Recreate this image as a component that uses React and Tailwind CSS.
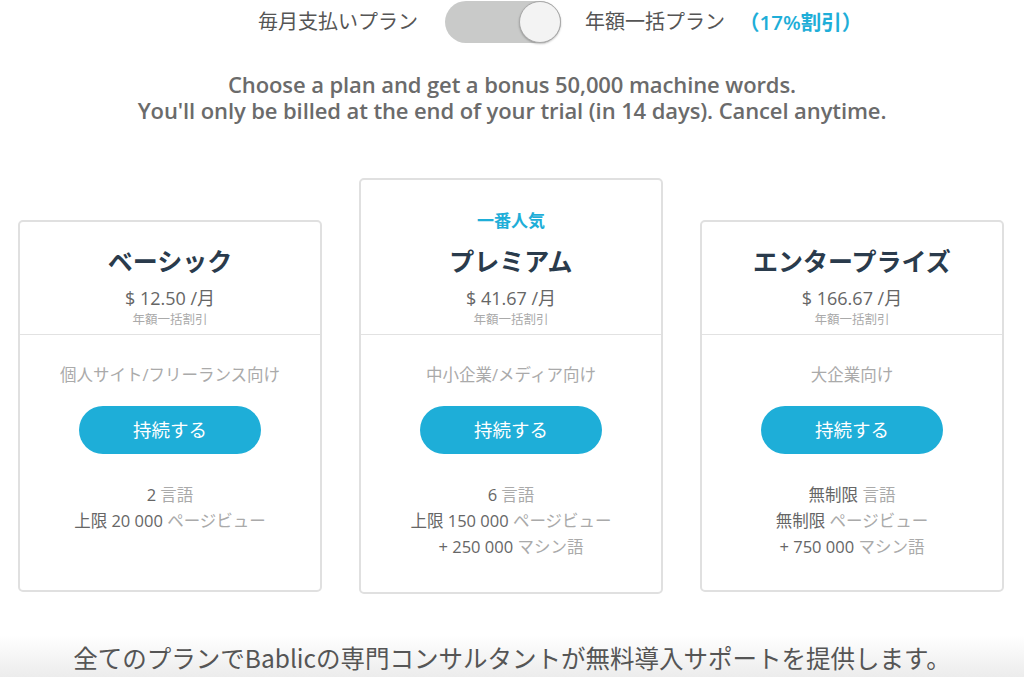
import React from "react";

const F = "font-['Open_Sans','Noto_Sans_CJK_JP',sans-serif]";

function Card({ badge, title, price, desc, features, tall }) {
  return (
    <div
      className={`w-[304px] border-2 border-[#e0e0e0] rounded-[5px] bg-white flex flex-col ${
        tall ? "h-[416px]" : "h-[372px] mt-[42px]"
      }`}
    >
      <div className={`border-b border-[#e2e2e2] flex flex-col items-center pb-[6px] ${tall ? "pt-[28px]" : "pt-[22px]"}`}>
        {badge && (
          <div className="text-[17px] leading-[24px] font-bold text-[#1eaed8] mb-[12px] font-['Noto_Sans_CJK_JP',sans-serif]">
            {badge}
          </div>
        )}
        <div className="text-[25px] leading-[32px] font-bold text-[#2a3b4c] font-['Noto_Sans_CJK_JP',sans-serif]">
          {title}
        </div>
        <div className="mt-[10px] text-[18px] leading-[24px] text-[#666]">
          $ {price} /月
        </div>
        <div className="mt-[2px] text-[12.5px] leading-[16px] text-[#aaa]">年額一括割引</div>
      </div>
      <div className="flex flex-col items-center pt-[28px]">
        <div className="text-[16.5px] leading-[24px] text-[#aaa]">{desc}</div>
        <button className="mt-[19px] w-[182px] h-[48px] rounded-full bg-[#1eaed8] text-white text-[18.5px] leading-[24px]">
          持続する
        </button>
        <div className="mt-[28px] flex flex-col items-center">
          {features.map(([a, b], i) => (
            <div key={i} className="text-[16.5px] leading-[26px]">
              <span className="text-[#666]">{a}</span>{" "}
              <span className="text-[#aaa]">{b}</span>
            </div>
          ))}
        </div>
      </div>
    </div>
  );
}

export default function App() {
  return (
    <div className={`w-[1024px] h-[677px] bg-white overflow-hidden flex flex-col ${F}`}>
      <div className="h-[44px] flex items-center pl-[258px]">
        <span className="text-[20px] text-[#555]">毎月支払いプラン</span>
        <div className="ml-[27px] w-[116px] h-[42px] rounded-full bg-[#c9cac9] flex items-center justify-end">
          <div className="w-[42px] h-[42px] rounded-full bg-[#f3f3f3] border border-[#a9a9a9] shadow-[0_1px_2px_rgba(0,0,0,0.25)]" />
        </div>
        <span className="ml-[24px] text-[20px] text-[#555]">年額一括プラン</span>
        <span className="ml-[14px] text-[20.5px] text-[#1eaed8] font-semibold">（17%割引）</span>
      </div>

      <div className="mt-[27px] text-center text-[22px] leading-[26px] font-semibold text-[#6b6b6b] font-['Open_Sans',sans-serif] tracking-[-0.1px]">
        <div>Choose a plan and get a bonus 50,000 machine words.</div>
        <div>You'll only be billed at the end of your trial (in 14 days). Cancel anytime.</div>
      </div>

      <div className="mt-[55px] flex items-start justify-between pl-[18px] pr-[20px]">
        <Card
          title="ベーシック"
          price="12.50"
          desc="個人サイト/フリーランス向け"
          features={[
            ["2", "言語"],
            ["上限 20 000", "ページビュー"],
          ]}
        />
        <Card
          tall
          badge="一番人気"
          title="プレミアム"
          price="41.67"
          desc="中小企業/メディア向け"
          features={[
            ["6", "言語"],
            ["上限 150 000", "ページビュー"],
            ["+ 250 000", "マシン語"],
          ]}
        />
        <Card
          title="エンタープライズ"
          price="166.67"
          desc="大企業向け"
          features={[
            ["無制限", "言語"],
            ["無制限", "ページビュー"],
            ["+ 750 000", "マシン語"],
          ]}
        />
      </div>

      <div className="flex-1 bg-linear-to-b from-white from-50% to-[#ececec] pt-[48px] flex justify-center">
        <div className="text-[24.5px] leading-[32px] text-[#555] font-['Noto_Sans_CJK_JP',sans-serif]">
          全てのプランでBablicの専門コンサルタントが無料導入サポートを提供します。
        </div>
      </div>
    </div>
  );
}
